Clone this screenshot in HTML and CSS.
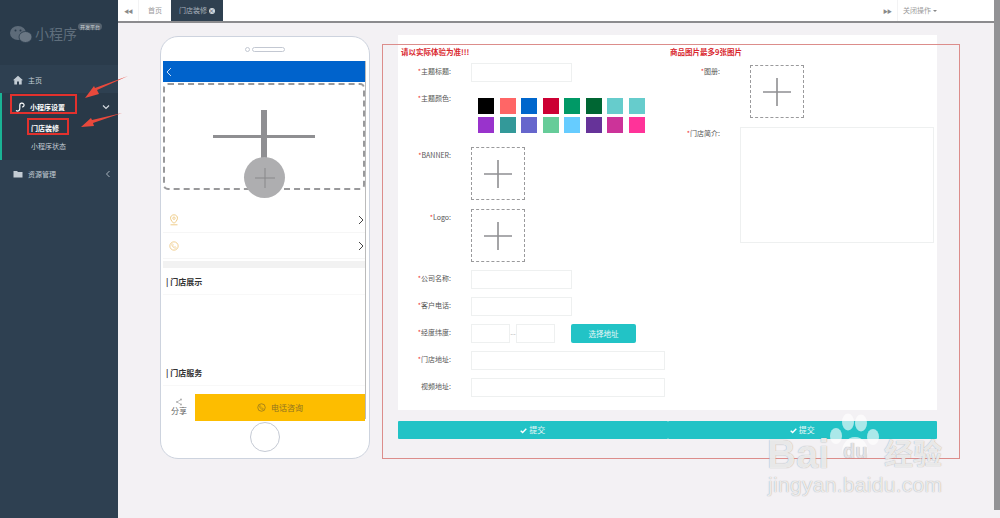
FILE: index.html
```html
<!DOCTYPE html>
<html lang="zh-CN">
<head>
    <meta charset="UTF-8">
    <title>门店装修</title>
    <link rel="stylesheet" href="styles.css">
</head>
<body>
<svg class="defs" width="0" height="0">
    <symbol id="plus" viewBox="0 0 54 54"><path d="M27 13V41M13 27H41" fill="none" stroke="#8f8f92" stroke-width="1.6"/></symbol>
    <symbol id="phoneIcon" viewBox="0 0 12 12"><circle cx="6" cy="6" r="5" fill="none" stroke="currentColor"/><path d="M4 3.2 3.3 4c0 2.400 2.300 4.700 4.700 4.700L8.800 8 7.500 6.900 6.800 7.400 4.600 5.200 5.100 4.500Z" fill="none" stroke="currentColor" stroke-width=".7"/></symbol>
    <symbol id="check" viewBox="0 0 10 10"><path d="M1 5.200 3.800 8 9 2.500" fill="none" stroke="#fff" stroke-width="2"/></symbol>
</svg>
<div class="app">
    <div class="sidebar">
        <div class="logo">
            <svg class="logo-icon" viewBox="0 0 22 17"><ellipse cx="8" cy="7" rx="8" ry="7" fill="#5d6b79"/><ellipse cx="15.500" cy="11" rx="6.500" ry="5.500" fill="#6a7784" stroke="#2b3c4c" stroke-width=".8"/><circle cx="5.500" cy="4.500" r="1" fill="#2b3c4c"/><circle cx="10.500" cy="4.500" r="1" fill="#2b3c4c"/></svg>
            <span class="logo-text">小程序</span>
            <span class="logo-badge">开发平台</span>
        </div>
        <div class="nav-item nav-home">
            <svg class="nav-icon" viewBox="0 0 10 10"><path d="M5 .8 0 5.200 1.300 5.200V9.500H4V6.500H6V9.500H8.700V5.200H10Z" fill="#c3ccd4"/></svg>
            <span>主页</span>
        </div>
        <div class="nav-group">
            <div class="nav-item nav-open">
                <svg class="nav-icon" viewBox="0 0 10 10"><path d="M1 8.500C3 9.800 4.800 8.500 4.800 6.500V3C4.800 1 7.500.5 8.700 2 9.500 3.200 8.800 5 7 5" fill="none" stroke="#fff" stroke-width="1.200"/></svg>
                <span>小程序设置</span>
                <svg class="chevron" viewBox="0 0 8 8"><path d="M1 2.500 4 5.500 7 2.500" fill="none" stroke="#d5dbe0" stroke-width="1.200"/></svg>
            </div>
            <div class="sub-item sub-active">门店装修</div>
            <div class="sub-item">小程序状态</div>
        </div>
        <div class="nav-item nav-res">
            <svg class="nav-icon" viewBox="0 0 10 10"><path d="M.5 2H4L5 3H9.500V8.500H.5Z" fill="#c3ccd4"/></svg>
            <span>资源管理</span>
            <svg class="chevron" viewBox="0 0 8 8"><path d="M5.500 1 2.500 4 5.500 7" fill="none" stroke="#a9b4bd" stroke-width="1"/></svg>
        </div>
    </div>

    <div class="main">
        <div class="tabs">
            <div class="tab-arrow">◀◀</div>
            <div class="tab">首页</div>
            <div class="tab tab-active">门店装修 <span class="tab-close">×</span></div>
            <div class="tab-spacer"></div>
            <div class="tab-arrow">▶▶</div>
            <div class="tab tab-close-all">关闭操作 <span class="caret"></span></div>
            <div class="tab-gap"></div>
        </div>
        <div class="content">
            <div class="phone">
                <div class="phone-top">
                    <span class="camera"></span>
                    <span class="speaker"></span>
                </div>
                <div class="screen">
                    <div class="app-header">
                        <svg class="back" viewBox="0 0 6 10"><path d="M5 1 1 5 5 9" fill="none" stroke="#cfe0f5" stroke-width="1"/></svg>
                    </div>
                    <div class="banner">
                        <svg class="banner-plus" viewBox="0 0 102 48"><path d="M51 0V48" stroke="#8f8f92" stroke-width="6"/><path d="M0 26.500H102" stroke="#8f8f92" stroke-width="3"/></svg>
                        <div class="banner-add"><svg class="add-plus" viewBox="0 0 20 20"><path d="M10 0V20M0 10H20" stroke="#88888a" stroke-width="1"/></svg></div>
                    </div>
                    <div class="info-row">
                        <svg class="info-icon" viewBox="0 0 10 12"><path d="M5 .8C2.800.8 1.500 2.400 1.500 4.200 1.500 6.500 5 9.500 5 9.500S8.500 6.500 8.500 4.200C8.500 2.400 7.200.8 5 .8Z" fill="none" stroke="#edc77e" stroke-width=".9"/><circle cx="5" cy="4.200" r="1.200" fill="none" stroke="#edc77e" stroke-width=".8"/><path d="M1.500 10.800H8.500" stroke="#edc77e" stroke-width=".9"/></svg>
                        <svg class="info-arrow" viewBox="0 0 6 10"><path d="M1 1 5 5 1 9" fill="none" stroke="#444" stroke-width="1"/></svg>
                    </div>
                    <div class="info-row">
                        <svg class="info-icon info-phone"><use href="#phoneIcon"/></svg>
                        <svg class="info-arrow" viewBox="0 0 6 10"><path d="M1 1 5 5 1 9" fill="none" stroke="#444" stroke-width="1"/></svg>
                    </div>
                    <div class="band"></div>
                    <div class="section-title">| 门店展示</div>
                    <div class="section-body"></div>
                    <div class="section-title">| 门店服务</div>
                    <div class="action-bar">
                        <div class="share">
                            <svg class="share-icon" viewBox="0 0 8 8"><path d="M6 1.500 2 4 6 6.500" fill="none" stroke="#aaa" stroke-width=".7"/><circle cx="6" cy="1.500" r=".9" fill="#aaa"/><circle cx="2" cy="4" r=".9" fill="#aaa"/><circle cx="6" cy="6.500" r=".9" fill="#aaa"/></svg>
                            <span>分享</span>
                        </div>
                        <div class="call">
                            <svg class="call-icon"><use href="#phoneIcon"/></svg>
                            <span>电话咨询</span>
                        </div>
                    </div>
                </div>
                <div class="home-btn"></div>
            </div>

            <div class="form-col">
                <div class="form-card">
                    <div class="form-left">
                        <div class="notice">请以实际体验为准!!!</div>
                        <div class="row row-first">
                            <label><i>*</i>主题标题:</label>
                            <div class="field field-short"></div>
                        </div>
                        <div class="row">
                            <label><i>*</i>主题颜色:</label>
                            <div class="swatches">
                                <span class="swatch c1"></span><span class="swatch c2"></span><span class="swatch c3"></span><span class="swatch c4"></span>
                                <span class="swatch c5"></span><span class="swatch c6"></span><span class="swatch c7"></span><span class="swatch c7"></span>
                                <span class="swatch c8"></span><span class="swatch c9"></span><span class="swatch c10"></span><span class="swatch c11"></span>
                                <span class="swatch c12"></span><span class="swatch c13"></span><span class="swatch c14"></span><span class="swatch c15"></span>
                            </div>
                        </div>
                        <div class="row row-banner">
                            <label><i>*</i>BANNER:</label>
                            <div class="upload"><svg class="upload-plus"><use href="#plus"/></svg></div>
                        </div>
                        <div class="row row-logo">
                            <label><i>*</i>Logo:</label>
                            <div class="upload"><svg class="upload-plus"><use href="#plus"/></svg></div>
                        </div>
                        <div class="row">
                            <label><i>*</i>公司名称:</label>
                            <div class="field field-short"></div>
                        </div>
                        <div class="row">
                            <label><i>*</i>客户电话:</label>
                            <div class="field field-short"></div>
                        </div>
                        <div class="row">
                            <label><i>*</i>经度纬度:</label>
                            <div class="field field-mini"></div>
                            <span class="dash">--</span>
                            <div class="field field-mini"></div>
                            <div class="pick-btn">选择地址</div>
                        </div>
                        <div class="row">
                            <label><i>*</i>门店地址:</label>
                            <div class="field field-long"></div>
                        </div>
                        <div class="row">
                            <label>视频地址:</label>
                            <div class="field field-long"></div>
                        </div>
                    </div>
                    <div class="form-right">
                        <div class="notice">商品图片最多9张图片</div>
                        <div class="row row-album">
                            <label><i>*</i>图册:</label>
                            <div class="upload upload-album"><svg class="upload-plus"><use href="#plus"/></svg></div>
                        </div>
                        <div class="row row-intro">
                            <label><i>*</i>门店简介:</label>
                            <div class="field intro"></div>
                        </div>
                    </div>
                </div>
                <div class="submit-bar">
                    <div class="submit"><svg class="check"><use href="#check"/></svg>提交</div>
                    <div class="submit"><svg class="check"><use href="#check"/></svg>提交</div>
                </div>
            </div>
            <div class="red-frame"></div>
        </div>
    </div>
    <div class="scrollbar"></div>
</div>

<!-- annotations on top of the screenshot -->
<div class="mark mark-group"></div>
<div class="mark mark-sub"></div>
<svg class="arrows" viewBox="0 0 140 140">
    <path d="M128 76 97 90 99 94 85 98 94 86 95 88Z" fill="#e8493c"/>
    <path d="M122 113 93 123 94 126 81 127 91 118 92 120Z" fill="#e8493c"/>
</svg>

<div class="watermark">
    <svg class="paw" viewBox="0 0 56 50">
        <ellipse cx="21" cy="9" rx="6" ry="8.500"/><ellipse cx="34" cy="10" rx="6" ry="8.500"/>
        <ellipse cx="9" cy="23" rx="6" ry="8"/><ellipse cx="46" cy="24" rx="6" ry="8"/>
        <path d="M28 24C20 24 15 32 15 38 15 44 22 46 28 44 34 46 41 44 41 38 41 32 36 24 28 24Z"/>
    </svg>
    <span class="wm-bai">Bai</span>
    <span class="wm-du">du</span>
    <span class="wm-jy">经验</span>
    <span class="wm-url">jingyan.baidu.com</span>
</div>
</body>
</html>
```

FILE: styles.css
```css
* {
    box-sizing: border-box;
}

body {
    margin: 0;
    width: 1000px;
    height: 518px;
    overflow: hidden;
    position: relative;
    font-family: "Noto Sans CJK SC", "Liberation Sans", sans-serif;
    font-size: 8px;
    color: #555;
    background: #f3f1f4;
}

.defs {
    position: absolute;
}

.app {
    display: flex;
    height: 518px;
}

/* sidebar */
.sidebar {
    width: 118px;
    flex-shrink: 0;
    font-size: 7px;
    background: #2e4051;
    color: #c3ccd4;
}

.logo {
    height: 65px;
    display: flex;
    background: #2a3b4b;
    padding: 22px 0 0 10px;
}

.logo-icon {
    width: 22px;
    height: 17px;
    margin-top: 4px;
}

.logo-text {
    font-size: 14px;
    line-height: 20px;
    margin: 1px 0 0 3px;
    color: #5f6e7c;
}

.logo-badge {
    height: 7px;
    line-height: 7px;
    font-size: 5px;
    margin: 1px 0 0 1px;
    padding: 0 2px;
    border-radius: 4px;
    background: #56636f;
    color: #c9cfd4;
}

.nav-item {
    display: flex;
    align-items: center;
    height: 28px;
    padding-left: 13px;
}

.nav-icon {
    width: 10px;
    height: 10px;
    margin-right: 5px;
}

.nav-home {
    padding-top: 2px;
}

.nav-group {
    height: 67px;
    background: #293948;
    border-left: 2px solid #1ab394;
}

.nav-open {
    color: #fff;
    font-weight: 700;
}

.nav-open .nav-icon {
    margin-left: 0;
    margin-right: 5px;
}

.nav-open span {
    width: 53px;
}

.nav-open .chevron {
    margin-left: 19px;
}

.chevron {
    width: 8px;
    height: 8px;
    margin-left: 48px;
}

.sub-item {
    height: 18px;
    line-height: 18px;
    padding-left: 29px;
}

.sub-active {
    color: #fff;
    font-weight: 700;
    margin-top: -2px;
}

/* tab bar */
.main {
    flex: 1;
    display: flex;
    flex-direction: column;
    min-width: 0;
}

.tabs {
    height: 23px;
    display: flex;
    align-items: stretch;
    font-size: 7px;
    background: #fff;
    border-bottom: 2px solid #8b8b8e;
    color: #999;
}

.tab-arrow {
    width: 20px;
    font-size: 5px;
    line-height: 21px;
    text-align: center;
    letter-spacing: -1px;
    color: #8a8a8a;
}

.tab {
    line-height: 21px;
    padding: 0 9px;
    border-left: 1px solid #f3f3f4;
}

.tab-active {
    width: 52px;
    padding: 0 0 0 8px;
    white-space: nowrap;
    background: #2f4050;
    color: #a7b1bb;
    border-left: 0;
}

.tab-close {
    display: inline-block;
    width: 6px;
    height: 6px;
    line-height: 6px;
    border-radius: 50%;
    font-size: 6px;
    text-align: center;
    background: #d5dade;
    color: #2f4050;
}

.tab-spacer {
    flex: 1;
}

.tab-close-all {
    width: 43px;
    padding: 0 0 0 5px;
    white-space: nowrap;
}

.caret {
    display: inline-block;
    border-top: 2px solid #888;
    border-left: 2px solid transparent;
    border-right: 2px solid transparent;
    vertical-align: middle;
}

.tab-gap {
    width: 60px;
}

/* content */
.content {
    flex: 1;
    position: relative;
    display: flex;
    align-items: flex-start;
    padding: 12px 0 0 42px;
}

.phone {
    width: 210px;
    height: 423px;
    margin-top: 1px;
    padding: 0 3px 0 2px;
    border: 1px solid #cdd3de;
    border-radius: 18px;
    background: #fff;
}

.phone-top {
    height: 24px;
    display: flex;
    align-items: center;
    justify-content: center;
}

.camera {
    width: 5px;
    height: 5px;
    border: 1px solid #c3c8d2;
    border-radius: 50%;
    margin-right: 2px;
}

.speaker {
    width: 33px;
    height: 5px;
    border: 1px solid #c3c8d2;
    border-radius: 3px;
}

.screen {
    height: 358px;
    border-right: 1px solid #bbb;
}

.app-header {
    height: 21px;
    background: #0063cc;
    display: flex;
    align-items: center;
    padding-left: 3px;
}

.back {
    width: 6px;
    height: 10px;
}

.banner {
    height: 107px;
    margin-top: 1px;
    position: relative;
    border: 2px dashed #99999b;
    border-radius: 5px;
    display: flex;
    justify-content: center;
    padding-top: 25px;
}

.banner-plus {
    width: 102px;
    height: 48px;
}

.banner-add {
    position: absolute;
    left: 79px;
    top: 72px;
    width: 41px;
    height: 41px;
    border-radius: 50%;
    background: #aeaeb0;
    display: flex;
    align-items: center;
    justify-content: center;
}

.add-plus {
    width: 20px;
    height: 20px;
}

.info-row {
    height: 26px;
    display: flex;
    align-items: center;
    justify-content: space-between;
    padding: 0 1px 0 6px;
    border-bottom: 1px solid #f6f6f6;
}

.banner + .info-row {
    margin-top: 17px;
}

.info-icon {
    width: 10px;
    height: 12px;
}

.info-phone {
    color: #edc77e;
}

.info-arrow {
    width: 6px;
    height: 10px;
}

.band {
    height: 7px;
    margin-top: 2px;
    background: #f2f2f2;
}

.section-title {
    height: 27px;
    line-height: 27px;
    padding-left: 3px;
    color: #333;
    font-weight: 700;
    border-bottom: 1px solid #f8f8f8;
}

.section-body {
    height: 64px;
}

.action-bar {
    height: 27px;
    margin-top: 8px;
    display: flex;
}

.share {
    width: 32px;
    display: flex;
    flex-direction: column;
    align-items: center;
    line-height: 10px;
    padding-top: 4px;
    color: #666;
}

.share-icon {
    width: 8px;
    height: 8px;
}

.call {
    flex: 1;
    display: flex;
    align-items: center;
    justify-content: center;
    gap: 5px;
    background: #fdbd00;
    color: #8f7420;
}

.call-icon {
    width: 9px;
    height: 9px;
    color: #8f7420;
}

.home-btn {
    width: 30px;
    height: 30px;
    margin: 3px 0 0 87px;
    border: 1px solid #c5cad4;
    border-radius: 50%;
}

/* form */
.form-col {
    width: 539px;
    margin-left: 28px;
}

.form-card {
    height: 375px;
    display: flex;
    padding-top: 12px;
    background: #fff;
}

.form-left {
    width: 270px;
}

.notice {
    height: 10px;
    line-height: 10px;
    padding-left: 3px;
    font-size: 7.500px;
    color: #d9282f;
    font-weight: 700;
}

.row {
    display: flex;
    margin-top: 8px;
}

.row label {
    width: 53px;
    margin-right: 20px;
    font-size: 7px;
    line-height: 17px;
    text-align: right;
    white-space: nowrap;
    color: #555;
}

.row label i {
    color: #e33;
    font-style: normal;
}

.row-first {
    margin-top: 6px;
}

.row-banner {
    margin-top: 14px;
}

.row-logo {
    margin-top: 9px;
}

.field {
    height: 19px;
    border: 1px solid #eef0f0;
    background: #fff;
}

.field-short {
    width: 101px;
}

.field-mini {
    width: 39px;
}

.field-long {
    width: 194px;
}

.dash {
    width: 6px;
    line-height: 19px;
    text-align: center;
    color: #bbb;
}

.pick-btn {
    width: 65px;
    height: 19px;
    margin-left: 16px;
    font-size: 7.500px;
    line-height: 19px;
    text-align: center;
    border-radius: 2px;
    background: #22c3c6;
    color: #e8f8f8;
}

.swatches {
    display: grid;
    grid-template-columns: repeat(8, 16px);
    column-gap: 5.500px;
    row-gap: 3px;
    margin-left: 7px;
    padding-top: 8px;
}

.swatch {
    height: 16px;
}

.c1 { background: #000; }
.c2 { background: #ff6666; }
.c3 { background: #0066cc; }
.c4 { background: #cc0033; }
.c5 { background: #009966; }
.c6 { background: #006633; }
.c7 { background: #66cccc; }
.c8 { background: #9933cc; }
.c9 { background: #339999; }
.c10 { background: #6666cc; }
.c11 { background: #66cc99; }
.c12 { background: #66ccff; }
.c13 { background: #663399; }
.c14 { background: #cc3399; }
.c15 { background: #ff3399; }

.upload {
    width: 54px;
    height: 53px;
    border: 1px dashed #9a9a9c;
    display: flex;
    align-items: center;
    justify-content: center;
}

.upload-plus {
    width: 54px;
    height: 54px;
    flex-shrink: 0;
}

.form-right {
    flex: 1;
}

.form-right .notice {
    padding-left: 2px;
}

.form-right .row label {
    width: 52px;
}

.upload-album {
    margin-left: 10px;
}

.row-intro {
    margin-top: 9px;
}

.intro {
    width: 194px;
    height: 116px;
}

.row-album label,
.row-intro label {
    line-height: 13px;
}

.submit-bar {
    display: flex;
    margin-top: 11px;
}

.submit {
    width: 50%;
    height: 18px;
    line-height: 18px;
    display: flex;
    align-items: center;
    justify-content: center;
    gap: 2px;
    background: #22c3c6;
    color: #e8f8f8;
    border-radius: 1px;
}

.check {
    width: 7px;
    height: 7px;
}

.red-frame {
    position: absolute;
    left: 264px;
    top: 21px;
    width: 578px;
    height: 415px;
    border: 1px solid #dc8d8b;
    pointer-events: none;
}

.scrollbar {
    position: absolute;
    top: 0;
    right: 0;
    width: 6px;
    height: 510px;
    background: #929295;
}

/* annotations */
.mark {
    position: absolute;
    border: 2px solid #e2312d;
}

.mark-group {
    left: 10px;
    top: 94px;
    width: 67px;
    height: 20px;
}

.mark-sub {
    left: 27px;
    top: 118px;
    width: 42px;
    height: 17px;
}

.arrows {
    position: absolute;
    left: 0;
    top: 0;
    width: 140px;
    height: 140px;
}

/* baidu watermark */
.watermark {
    position: absolute;
    left: 760px;
    top: 405px;
    width: 200px;
    height: 100px;
    color: rgba(255, 255, 255, .78);
    text-shadow: 0 0 1px rgba(120, 120, 120, .75);
}

.paw {
    position: absolute;
    left: 67px;
    top: 8px;
    width: 56px;
    height: 50px;
    fill: rgba(255, 255, 255, .62);
}

.wm-bai {
    position: absolute;
    left: 7px;
    top: 34px;
    font: 700 40px/30px "Liberation Sans", sans-serif;
}

.wm-du {
    position: absolute;
    left: 83px;
    top: 36px;
    font: 700 20px/20px "Liberation Sans", sans-serif;
    color: #e4e2e6;
}

.wm-jy {
    position: absolute;
    left: 124px;
    top: 32px;
    font-size: 29px;
    line-height: 30px;
    font-weight: 700;
}

.wm-url {
    position: absolute;
    left: 8px;
    top: 68px;
    font: 400 21px/24px "Liberation Sans", sans-serif;
    letter-spacing: .3px;
}
```
